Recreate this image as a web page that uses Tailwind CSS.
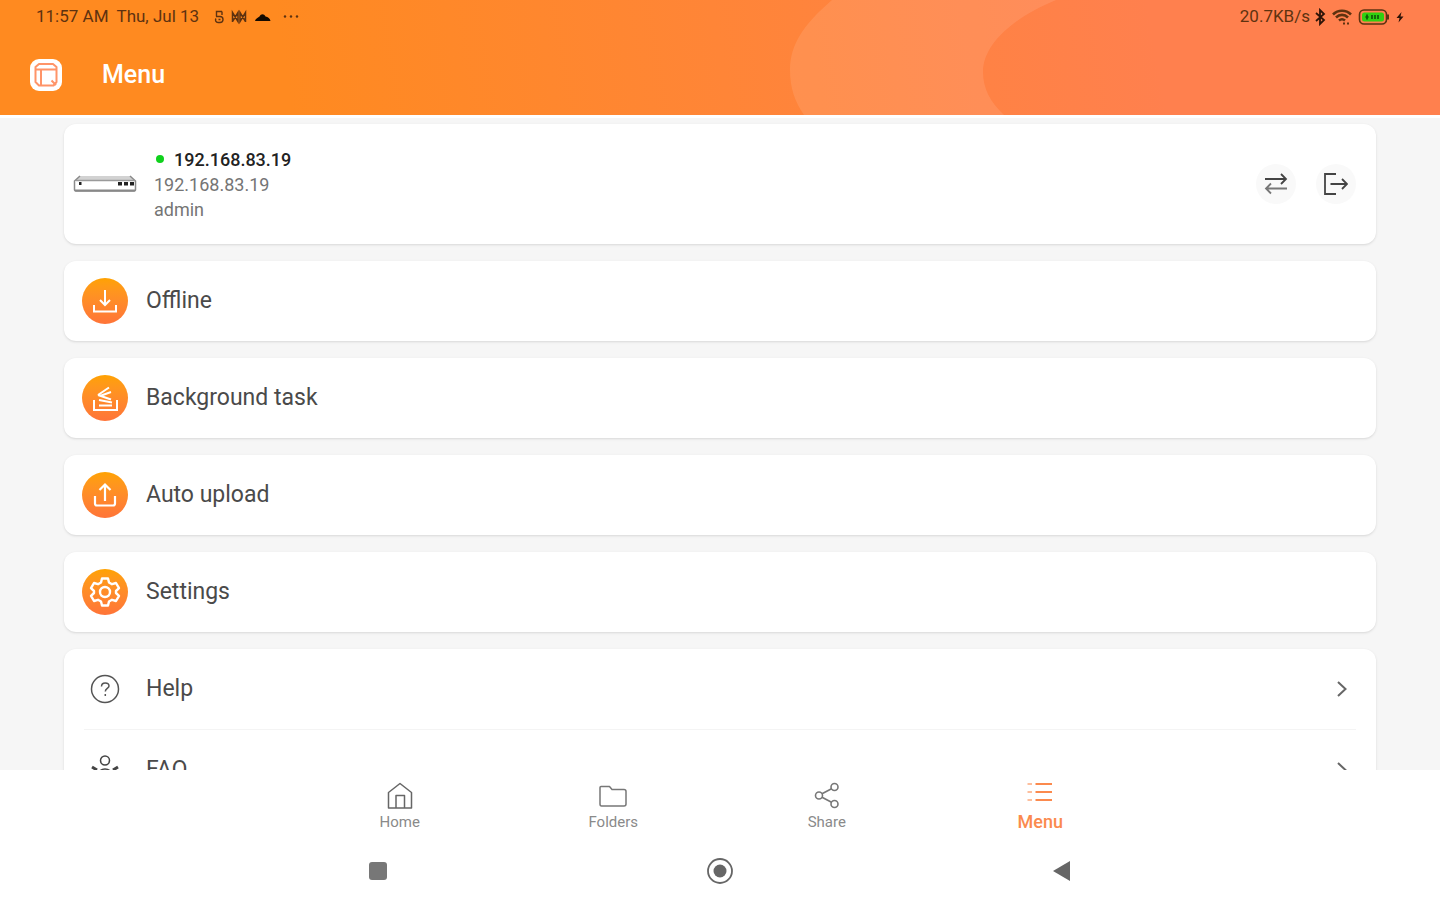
<!DOCTYPE html>
<html lang="en">
<head>
  <meta charset="UTF-8">
  <meta name="viewport" content="width=device-width, initial-scale=1">
  <title>Menu</title>
  <script src="https://cdn.jsdelivr.net/npm/@tailwindcss/browser@4"></script>
</head>
<body class="h-screen flex flex-col bg-white font-['Roboto','Liberation_Sans',sans-serif] text-[#4a4a4a]">

  <header class="relative shrink-0 bg-linear-[80deg] from-[#ff8a20] from-20% to-[#ff804e] to-80%">
    <svg class="absolute inset-0 w-full h-full" viewBox="0 0 1440 115" preserveAspectRatio="none" aria-hidden="true">
      <path d="M832 0C803 25 790 45 790 70C790 88 795 102 804 115H1004C990 102 983 88 983 72C983 45 1012 18 1056 0Z" fill="#fff" fill-opacity=".1"/>
    </svg>

    <!-- status bar -->
    <div class="relative h-[34px] pl-9 pr-[34px] flex items-center justify-between text-[17px] text-[#5e3210]">
      <div class="flex items-center gap-2">
        <span>11:57 AM</span>
        <span>Thu, Jul 13</span>
        <svg class="w-4 h-4 ml-1" viewBox="0 0 16 16" fill="none" stroke="currentColor" stroke-width="1.4"><path d="M11 2.500H5.500v5M11 2.500V6M5 7.500h4a3 3 0 0 1 0 6H7a2.500 2.500 0 0 1-2-4M7.500 10.500h2"/></svg>
        <svg class="w-4 h-4 -ml-1" viewBox="0 0 16 16" fill="none" stroke="currentColor" stroke-width="1.5"><path d="M1.500 13V3.500L7 12.500V3.500L1.500 12.500M14.500 13V3.500L9 12.500V3.500L14.500 12.500"/></svg>
        <svg class="w-4 h-4" viewBox="0 0 16 16" fill="#140a00"><path d="M0 12C.5 9.500 2.500 9 4.500 7.500C6 4.500 9 4.500 10.500 7.500C13 8 15 9.500 15.500 12Z"/></svg>
        <svg class="w-4 h-4 ml-1" viewBox="0 0 16 16" fill="currentColor"><circle cx="2" cy="7.500" r="1.200"/><circle cx="8" cy="7.500" r="1.200"/><circle cx="14" cy="7.500" r="1.200"/></svg>
      </div>
      <div class="flex items-center gap-1">
        <span>20.7KB/s</span>
        <svg class="w-3 h-[18px]" viewBox="0 0 12 18" fill="none" stroke="#2e1408" stroke-width="1.800"><path d="M2 5l8 7-4 4V2l4 4-8 7"/></svg>
        <svg class="w-6 h-[18px]" viewBox="0 0 24 18" fill="none" stroke="currentColor" stroke-width="2.600"><path d="M3 6.500C8 1.500 16 1.500 21 6.500M6 9.500C9.500 6 14.500 6 18 9.500M9 12.500C11 10.800 13 10.800 15 12.500"/><path d="M13 15.500h2M17 15.500h2" stroke-width="2"/></svg>
        <svg class="w-8 h-[18px]" viewBox="0 0 32 18"><rect x="1.500" y="2" width="27" height="14" rx="4.500" fill="none" stroke="currentColor" stroke-width="1.600"/><path d="M30 6.500v5" stroke="currentColor" stroke-width="2"/><rect x="4" y="4.500" width="22" height="9" rx="2.500" fill="#2fd010"/><path d="M9 6.500v5M7.500 9h3M14 7v4M17 7v4M20 7v4" stroke="#145c08" stroke-width="1.800"/></svg>
        <svg class="w-3 h-[18px]" viewBox="0 0 12 18" fill="#2e1408"><path d="M7.500 4L2.500 10H5.500L4.500 14.500L9.500 8.500H6.500Z"/></svg>
      </div>
    </div>

    <!-- title bar -->
    <div class="relative h-[81px] px-[30px] flex items-center gap-10">
      <svg class="w-8 h-8" viewBox="0 0 32 32" aria-hidden="true">
        <rect width="32" height="32" rx="9" fill="#fff"/>
        <g fill="none" stroke="#ff9468" stroke-width="2" stroke-linejoin="round">
          <path d="M9 5H23L26.500 8V23L23.500 26.500H9L5.500 23V8Z"/>
          <path d="M5.500 10.500H26M11 10.500V26M21.500 21.500L26 26"/>
        </g>
      </svg>
      <h1 class="text-[25px] font-medium text-white">Menu</h1>
    </div>
  </header>

  <main class="flex-1 min-h-0 overflow-hidden bg-[#f6f6f6] border-t-[3px] border-white px-16 pt-1.5 flex flex-col gap-[17px] text-[23px]">

    <section class="shrink-0 h-[120px] rounded-xl bg-white shadow-sm flex items-center pl-[9px] pr-5">
      <svg class="w-16 h-6" viewBox="0 0 64 24" aria-hidden="true">
        <path d="M7 4H57L62 9H2Z" fill="#d2d2d2"/>
        <path d="M7 4L1.500 9V18Q1.500 19 3 19H61Q62.500 19 62.500 18V9L57 4" fill="none" stroke="#8a8a8a" stroke-width="1.500"/>
        <path d="M3 8.500H62" stroke="#9a9a9a" stroke-width="1.500"/>
        <path d="M2 18.500H62" stroke="#888" stroke-width="2"/>
        <g fill="#222"><rect x="6" y="10" width="2.500" height="3"/><rect x="45" y="10" width="4" height="3.500"/><rect x="51" y="10" width="4" height="3.500"/><rect x="57" y="10" width="4" height="3.500"/></g>
      </svg>
      <div class="flex-1 ml-[17px] text-lg leading-[25px] text-[#757575]">
        <p class="flex items-center gap-[10px] font-medium text-[#222]"><span class="w-2 h-2 ml-0.5 rounded-full bg-[#0fd11c]"></span>192.168.83.19</p>
        <p>192.168.83.19</p>
        <p>admin</p>
      </div>
      <div class="flex gap-5 text-[#444]">
        <button type="button" aria-label="Switch device" class="w-10 h-10 rounded-full bg-[#f9f9f9] flex items-center justify-center">
          <svg class="w-6 h-6" viewBox="0 0 24 24" fill="none" stroke="currentColor" stroke-width="1.800"><path d="M1 7H22M17 2l5 5-5 5"/><path d="M23 16.500H2M7 11.500l-5 5 5 5" stroke="#777"/></svg>
        </button>
        <button type="button" aria-label="Log out" class="w-10 h-10 rounded-full bg-[#f9f9f9] flex items-center justify-center">
          <svg class="w-6 h-6" viewBox="0 0 24 24" fill="none" stroke="currentColor" stroke-width="1.800"><path d="M12 2H1V22H12M6.500 12H23M18 7l5 5-5 5"/></svg>
        </button>
      </div>
    </section>

    <a href="#offline" class="shrink-0 h-20 rounded-xl bg-white shadow-sm flex items-center gap-[18px] px-[18px]">
      <span class="w-[46px] h-[46px] rounded-full bg-linear-to-b from-[#ffa200] to-[#ff7438] flex items-center justify-center">
        <svg class="w-7 h-7" viewBox="0 0 28 28" fill="none" stroke="#fff" stroke-width="2"><path d="M14 3V18M9 13L14 18L19 13M3 18V24.500H25V18"/></svg>
      </span>
      Offline
    </a>

    <a href="#tasks" class="shrink-0 h-20 rounded-xl bg-white shadow-sm flex items-center gap-[18px] px-[18px]">
      <span class="w-[46px] h-[46px] rounded-full bg-linear-to-b from-[#ffa200] to-[#ff7438] flex items-center justify-center">
        <svg class="w-7 h-7" viewBox="0 0 28 28" fill="none" stroke="#fff" stroke-width="2"><path d="M3 16V26H26V16M8 21.500H21M8 16L21 18.500M7 11L20 15.500M7 11L18 3.500M9 12L20 8"/></svg>
      </span>
      Background task
    </a>

    <a href="#upload" class="shrink-0 h-20 rounded-xl bg-white shadow-sm flex items-center gap-[18px] px-[18px]">
      <span class="w-[46px] h-[46px] rounded-full bg-linear-to-b from-[#ffa200] to-[#ff7438] flex items-center justify-center">
        <svg class="w-7 h-7" viewBox="0 0 28 28" fill="none" stroke="#fff" stroke-width="2.200"><path d="M14 20V4M8.500 9L14 3.500L19.500 9M4 15V22.500Q4 24.500 6 24.500H22Q24 24.500 24 22.500V15"/></svg>
      </span>
      Auto upload
    </a>

    <a href="#settings" class="shrink-0 h-20 rounded-xl bg-white shadow-sm flex items-center gap-[18px] px-[18px]">
      <span class="w-[46px] h-[46px] rounded-full bg-linear-to-b from-[#ffa200] to-[#ff7438] flex items-center justify-center">
        <svg class="w-9 h-9" viewBox="0 0 36 36" fill="none" stroke="#fff" stroke-width="2.400" stroke-linejoin="round"><path d="M15 4.500H21L22 8.500L25 10.200L29 9L32 14.200L29 17V19L32 21.800L29 27L25 25.800L22 27.500L21 31.500H15L14 27.500L11 25.800L7 27L4 21.800L7 19V17L4 14.200L7 9L11 10.200L14 8.500Z"/><circle cx="18" cy="18" r="5"/></svg>
      </span>
      Settings
    </a>

    <section class="shrink-0 rounded-xl bg-white shadow-sm px-5">
      <a href="#help" class="h-[81px] border-b border-[#f4f4f4] flex items-center">
        <svg class="w-[42px] h-[30px]" viewBox="0 0 42 30" fill="none" stroke="#555" stroke-width="1.500"><circle cx="21" cy="15" r="13.500"/><path d="M17.500 12.500C17.500 7.500 25 8 25 12C25 14.500 21.300 14.500 21.300 17.500M21.300 20v2"/></svg>
        <span class="flex-1 ml-5">Help</span>
        <svg class="w-3 h-4 mr-2" viewBox="0 0 12 16" fill="none" stroke="#666" stroke-width="2"><path d="M2 1l7.500 7L2 15"/></svg>
      </a>
      <a href="#faq" class="h-20 flex items-center">
        <svg class="w-[42px] h-[30px]" viewBox="0 0 42 30" fill="none" stroke="#444" stroke-width="1.500"><circle cx="21" cy="5.500" r="4.500"/><path d="M14 28V20C14 12 28 12 28 20V28M8 28h26"/><path d="M8 12l5 3M34 12l-5 3" stroke-width="3"/></svg>
        <span class="flex-1 ml-5">FAQ</span>
        <svg class="w-3 h-4 mr-2" viewBox="0 0 12 16" fill="none" stroke="#666" stroke-width="2"><path d="M2 1l7.500 7L2 15"/></svg>
      </a>
    </section>
  </main>

  <nav class="shrink-0 h-[71px] w-[854px] max-w-full mx-auto grid grid-cols-4 text-[15px] leading-5 text-[#8a8a8a]">
    <a href="#home" class="pt-3 flex flex-col items-center gap-0.5">
      <svg class="w-7 h-7" viewBox="0 0 28 28" fill="none" stroke="#666" stroke-width="1.500" stroke-linejoin="round"><path d="M2.500 10.500L14 1.500L25.500 10.500V26H2.500ZM10 26V13.500H18.500V26"/></svg>
      Home
    </a>
    <a href="#folders" class="pt-3 flex flex-col items-center gap-0.5">
      <svg class="w-7 h-7" viewBox="0 0 28 28" fill="none" stroke="#777" stroke-width="1.500" stroke-linejoin="round"><path d="M2 4.500H10.500L13 7.500H25Q27 7.500 27 9.500V22Q27 24 25 24H2.500Q1 24 1 22V5.500Q1 4.500 2 4.500Z"/></svg>
      Folders
    </a>
    <a href="#share" class="pt-3 flex flex-col items-center gap-0.5">
      <svg class="w-7 h-7" viewBox="0 0 28 28" fill="none" stroke="#777" stroke-width="1.600"><circle cx="6" cy="13.500" r="3.500"/><circle cx="21.500" cy="5" r="3.500"/><circle cx="21.500" cy="22" r="3.500"/><path d="M9 11.800L18.500 6.700M9 15.200L18.500 20.300"/></svg>
      Share
    </a>
    <a href="#menu" aria-current="page" class="pt-2 flex flex-col items-center gap-0.5 text-lg font-medium text-[#fb8a4e]">
      <svg class="w-7 h-7" viewBox="0 0 28 28" fill="none" stroke="currentColor" stroke-width="2.200"><path d="M9.500 6H26M9.500 14H26M9.500 22H26"/><path d="M1.500 6H6M1.500 14H6M1.500 22H6" stroke-opacity=".55"/></svg>
      Menu
    </a>
  </nav>

  <!-- system navigation -->
  <div class="shrink-0 h-[59px] w-[1026px] max-w-full mx-auto grid grid-cols-3 place-items-center">
    <button type="button" aria-label="Recent apps"><svg class="w-7 h-7" viewBox="0 0 28 28"><rect x="5" y="5" width="18" height="18" rx="3" fill="#777"/></svg></button>
    <button type="button" aria-label="Home screen"><svg class="w-7 h-7" viewBox="0 0 28 28"><circle cx="14" cy="14" r="12" fill="none" stroke="#666" stroke-width="1.800"/><circle cx="14" cy="14" r="6.500" fill="#666"/></svg></button>
    <button type="button" aria-label="Back"><svg class="w-7 h-7" viewBox="0 0 28 28"><path d="M22 4V24L5 14Z" fill="#666"/></svg></button>
  </div>

</body>
</html>
